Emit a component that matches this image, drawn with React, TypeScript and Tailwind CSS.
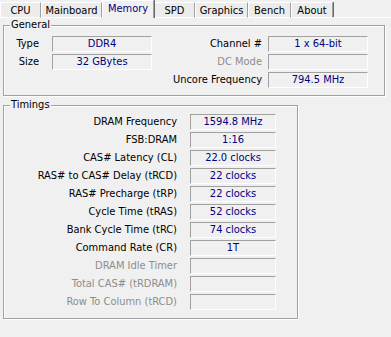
const tabs = ["CPU", "Mainboard", "Memory", "SPD", "Graphics", "Bench", "About"];
const tabWidths = [41, 61, 52, 41, 53, 43, 42];

const timings = [
  { label: "DRAM Frequency", value: "1594.8 MHz" },
  { label: "FSB:DRAM", value: "1:16" },
  { label: "CAS# Latency (CL)", value: "22.0 clocks" },
  { label: "RAS# to CAS# Delay (tRCD)", value: "22 clocks" },
  { label: "RAS# Precharge (tRP)", value: "22 clocks" },
  { label: "Cycle Time (tRAS)", value: "52 clocks" },
  { label: "Bank Cycle Time (tRC)", value: "74 clocks" },
  { label: "Command Rate (CR)", value: "1T" },
  { label: "DRAM Idle Timer", value: "", off: true },
  { label: "Total CAS# (tRDRAM)", value: "", off: true },
  { label: "Row To Column (tRCD)", value: "", off: true },
];

const Field = ({ value, w }: { value?: string; w: string }) => (
  <div
    className={`${w} h-[16px] shrink-0 border-t border-l border-[#a0a0a0] border-b border-r border-b-white border-r-white bg-[#f0f0f0] text-[#000080] text-center leading-[14px]`}
  >
    {value}
  </div>
);

const Group = ({ title, className, children }: { title: string; className: string; children: React.ReactNode }) => (
  <div className={`border border-[#a0a0a0] shadow-[inset_1px_1px_0_#ffffff,1px_1px_0_#ffffff] ${className}`}>
    <div className="-mt-[8px] ml-[6px] w-fit bg-[#f0f0f0] px-[1px] leading-[14px]">{title}</div>
    {children}
  </div>
);

export default function App() {
  return (
    <div
      className="w-[391px] h-[337px] overflow-hidden bg-[#f0f0f0] text-[11px] text-black"
      style={{ fontFamily: '"DejaVu Sans Condensed", "Liberation Sans", sans-serif' }}
    >
      <div className="flex h-[18px] items-end">
        {tabs.map((t, i) => {
          const on = t === "Memory";
          return (
            <div
              key={t}
              style={{ width: tabWidths[i] }}
              className={
                on
                  ? "h-[18px] border-t border-l border-white shadow-[1px_0_0_#696969] border-r border-r-[#a0a0a0] bg-[#f0f0f0] text-center leading-[16px] text-[#000080] relative z-10"
                  : "h-[16px] border-t border-l border-white border-r border-r-[#a0a0a0] shadow-[1px_0_0_#696969] bg-[#ececec] text-center leading-[15px] border-b border-b-white"
              }
            >
              {t}
            </div>
          );
        })}
        <div className="flex-1 h-[1px] bg-white" />
      </div>

      <div className="pl-[3px] pt-[7px]">
        <Group title="General" className="w-[382px] h-[71px]">
          <div className="mt-[4px] flex flex-col gap-[2px]">
            <div className="flex h-[16px] items-center">
              <div className="w-[35px] text-right leading-[16px]">Type</div>
              <div className="w-[13px]" />
              <Field w="w-[100px]" value="DDR4" />
              <div className="w-[110px] text-right leading-[16px]">Channel #</div>
              <div className="w-[6px]" />
              <Field w="w-[100px]" value="1 x 64-bit" />
            </div>
            <div className="flex h-[16px] items-center">
              <div className="w-[35px] text-right leading-[16px]">Size</div>
              <div className="w-[13px]" />
              <Field w="w-[100px]" value="32 GBytes" />
              <div className="w-[110px] text-right leading-[16px] text-[#8d8d8d]">DC Mode</div>
              <div className="w-[6px]" />
              <Field w="w-[100px]" />
            </div>
            <div className="flex h-[16px] items-center">
              <div className="w-[148px]" />
              <div className="w-[110px] text-right leading-[16px] whitespace-nowrap">Uncore Frequency</div>
              <div className="w-[6px]" />
              <Field w="w-[100px]" value="794.5 MHz" />
            </div>
          </div>
        </Group>

        <Group title="Timings" className="mt-[9px] w-[295px] h-[214px]">
          <div className="mt-[2px] flex flex-col gap-[2px]">
            {timings.map((r) => (
              <div key={r.label} className="flex h-[16px] items-center">
                <div className={`w-[173px] text-right leading-[16px] whitespace-nowrap ${r.off ? "text-[#8d8d8d]" : ""}`}>
                  {r.label}
                </div>
                <div className="w-[13px]" />
                <Field w="w-[86px]" value={r.value} />
              </div>
            ))}
          </div>
        </Group>
      </div>
    </div>
  );
}
